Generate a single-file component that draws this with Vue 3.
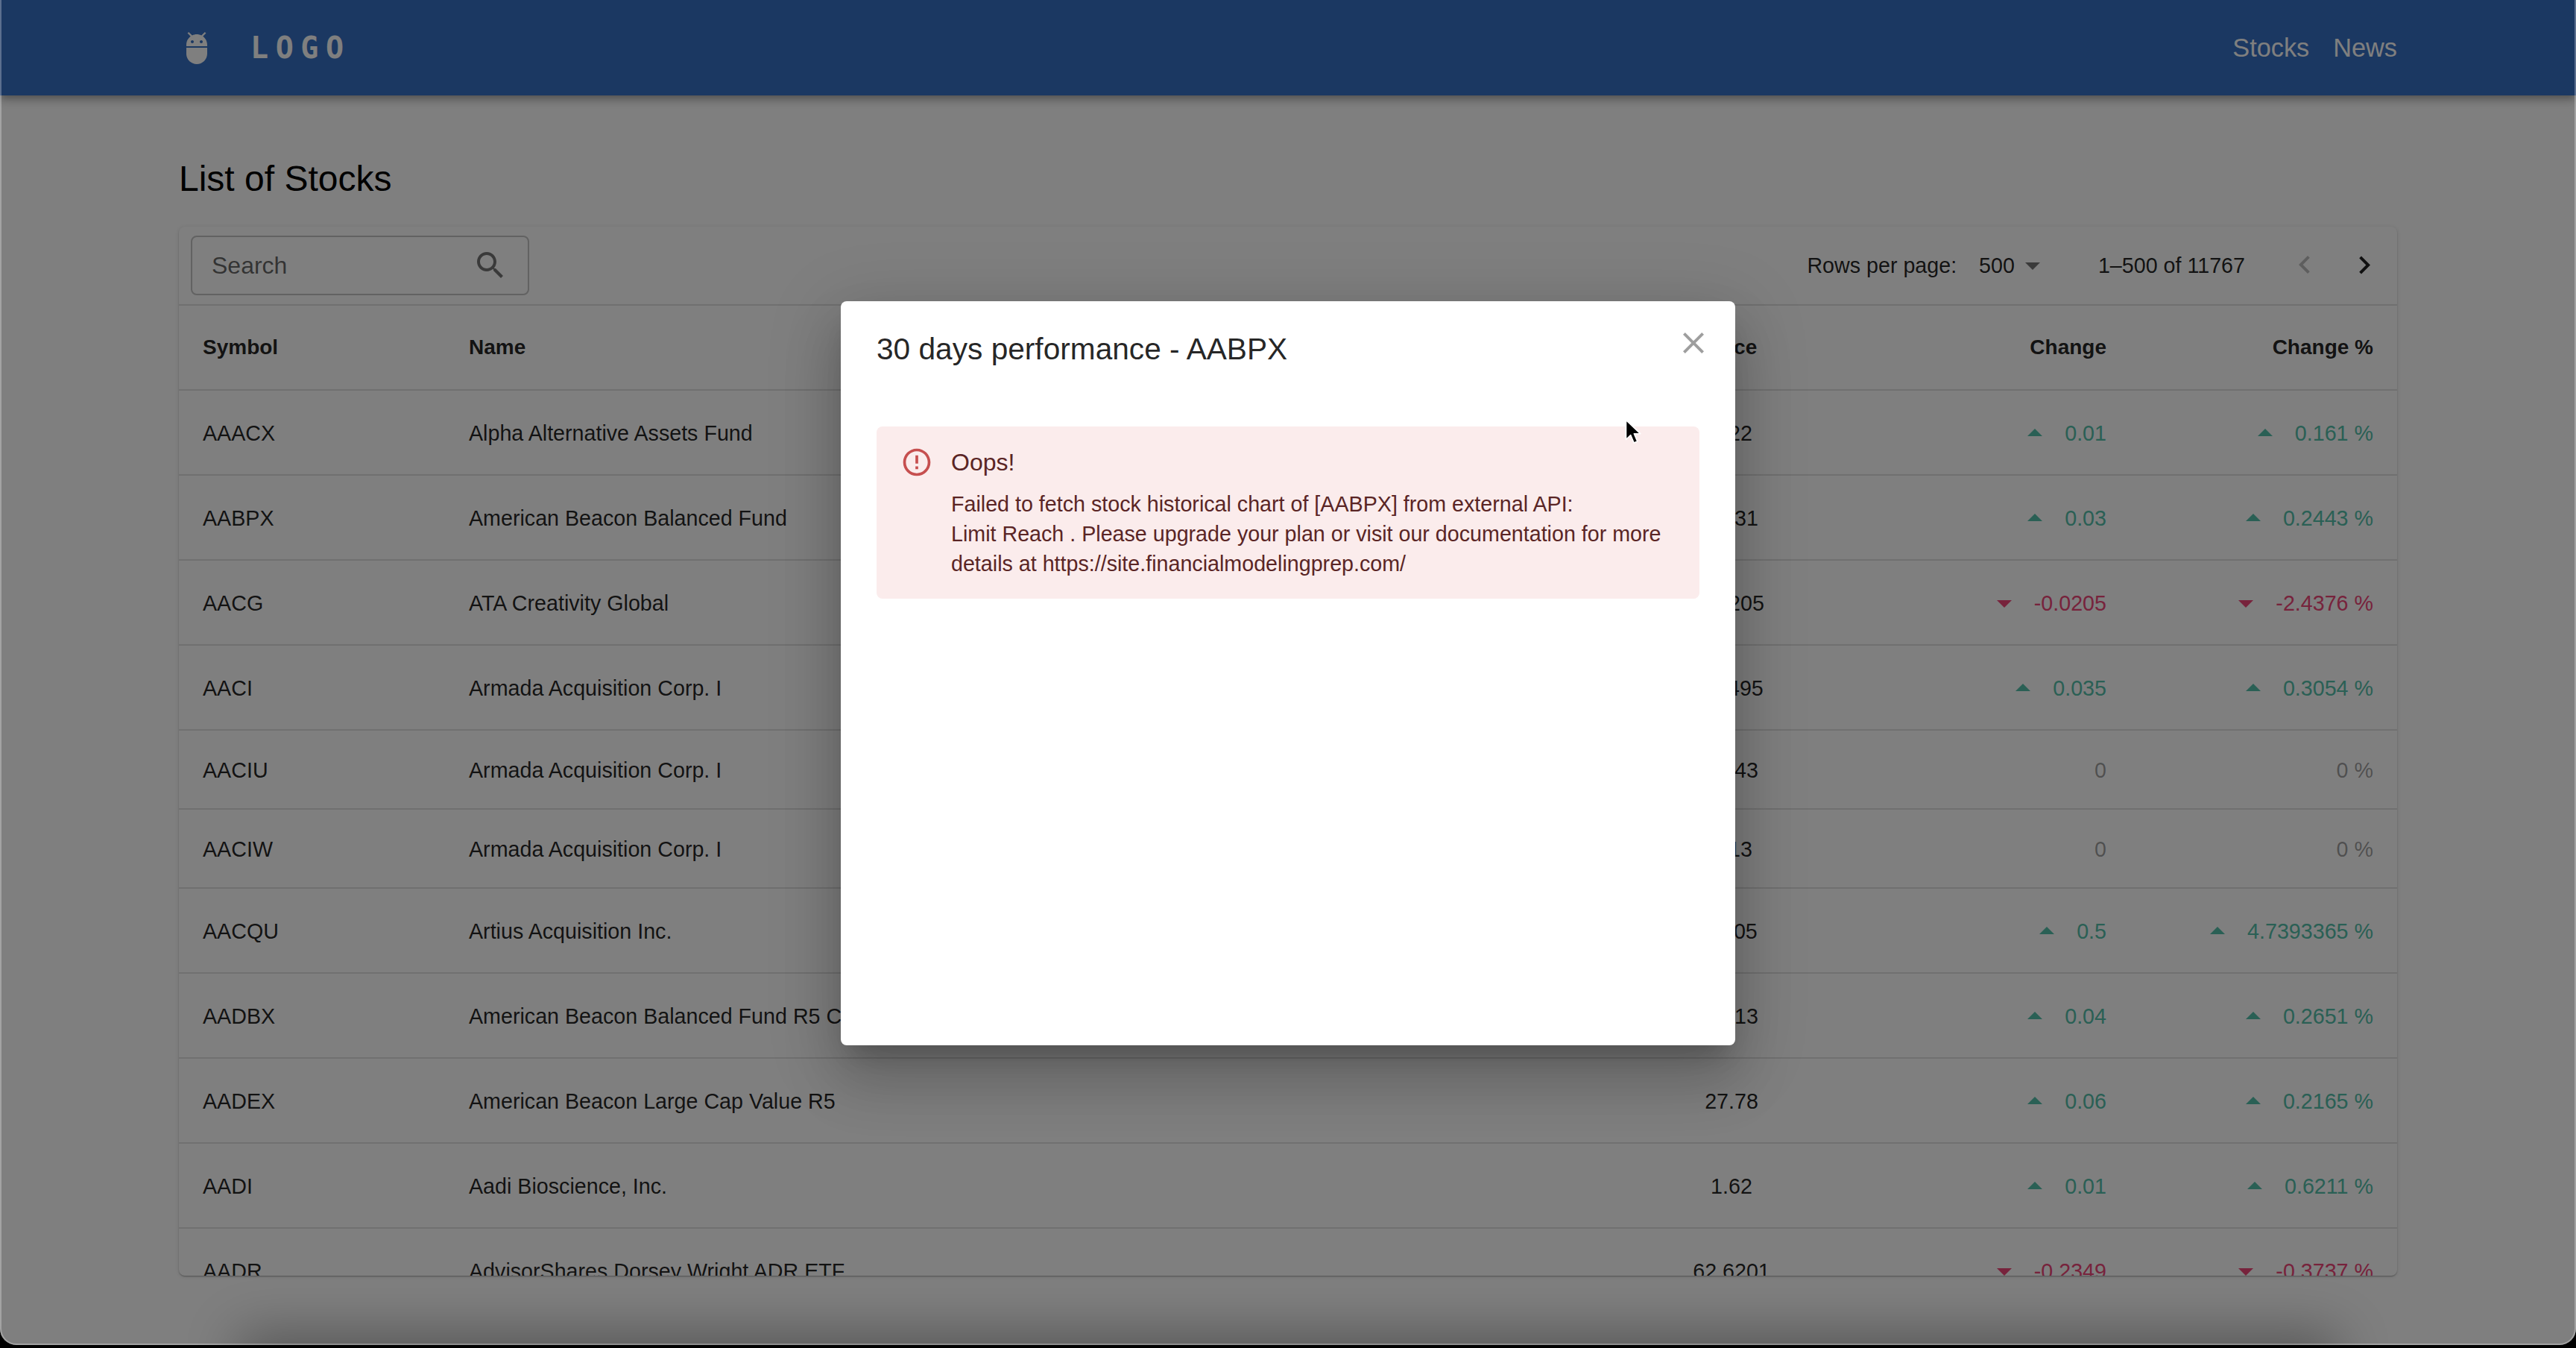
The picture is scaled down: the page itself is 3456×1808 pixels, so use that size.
<script setup>
const rows = [
  { symbol: 'AAACX', name: 'Alpha Alternative Assets Fund', price: '6.22', change: 0.01, percent: 0.161 },
  { symbol: 'AABPX', name: 'American Beacon Balanced Fund', price: '12.31', change: 0.03, percent: 0.2443 },
  { symbol: 'AACG', name: 'ATA Creativity Global', price: '0.8205', change: -0.0205, percent: -2.4376 },
  { symbol: 'AACI', name: 'Armada Acquisition Corp. I', price: '11.495', change: 0.035, percent: 0.3054 },
  { symbol: 'AACIU', name: 'Armada Acquisition Corp. I', price: '10.43', change: 0, percent: 0 },
  { symbol: 'AACIW', name: 'Armada Acquisition Corp. I', price: '0.13', change: 0, percent: 0 },
  { symbol: 'AACQU', name: 'Artius Acquisition Inc.', price: '11.05', change: 0.5, percent: 4.7393365 },
  { symbol: 'AADBX', name: 'American Beacon Balanced Fund R5 Class', price: '15.13', change: 0.04, percent: 0.2651 },
  { symbol: 'AADEX', name: 'American Beacon Large Cap Value R5', price: '27.78', change: 0.06, percent: 0.2165 },
  { symbol: 'AADI', name: 'Aadi Bioscience, Inc.', price: '1.62', change: 0.01, percent: 0.6211 },
  { symbol: 'AADR', name: 'AdvisorShares Dorsey Wright ADR ETF', price: '62.6201', change: -0.2349, percent: -0.3737 },
]

function trend(value) {
  if (value > 0) return 'up'
  if (value < 0) return 'down'
  return 'flat'
}
</script>

<template>
  <div class="screen">
    <header class="appbar">
      <div class="brand">
        <svg class="brand-icon" viewBox="0 0 24 24">
          <path d="M5 16c0 3.87 3.13 7 7 7s7-3.13 7-7v-4H5v4zM16.12 4.37l2.1-2.1-.82-.83-2.3 2.31C14.16 3.28 13.1 3 12 3s-2.16.28-3.09.75L6.6 1.44l-.82.83 2.1 2.1C6.14 5.64 5 7.68 5 10v1h14v-1c0-2.32-1.14-4.36-2.88-5.63zM9 9c-.55 0-1-.45-1-1s.45-1 1-1 1 .45 1 1-.45 1-1 1zm6 0c-.55 0-1-.45-1-1s.45-1 1-1 1 .45 1 1-.45 1-1 1z" />
        </svg>
        <span class="brand-text">LOGO</span>
      </div>
      <nav class="nav">
        <a>Stocks</a>
        <a>News</a>
      </nav>
    </header>

    <main class="page">
      <h1 class="page-title">List of Stocks</h1>

      <section class="card">
        <div class="toolbar">
          <label class="search">
            <input type="text" placeholder="Search" />
            <svg viewBox="0 0 24 24">
              <path d="M15.5 14h-.79l-.28-.27C15.41 12.59 16 11.11 16 9.5 16 5.91 13.09 3 9.5 3S3 5.91 3 9.5 5.91 16 9.5 16c1.61 0 3.09-.59 4.23-1.57l.27.28v.79l5 4.99L20.49 19l-4.99-5zm-6 0C7.01 14 5 11.99 5 9.5S7.01 5 9.5 5 14 7.01 14 9.5 11.99 14 9.5 14z" />
            </svg>
          </label>
          <div class="pagination">
            <span>Rows per page:</span>
            <span class="select">
              500
              <svg viewBox="0 0 24 24"><path d="M7 10l5 5 5-5z" /></svg>
            </span>
            <span>1–500 of 11767</span>
            <div class="page-actions">
              <button class="disabled">
                <svg viewBox="0 0 24 24"><path d="M15.41 16.09l-4.58-4.59 4.58-4.59L14 5.5l-6 6 6 6z" /></svg>
              </button>
              <button>
                <svg viewBox="0 0 24 24"><path d="M8.59 16.34l4.58-4.59-4.58-4.59L10 5.75l6 6-6 6z" /></svg>
              </button>
            </div>
          </div>
        </div>

        <div class="table-wrap">
          <table>
            <colgroup>
              <col style="width: 357px" />
              <col />
              <col style="width: 362px" />
              <col style="width: 354px" />
              <col style="width: 358px" />
            </colgroup>
            <thead>
              <tr>
                <th>Symbol</th>
                <th>Name</th>
                <th class="center">Price</th>
                <th class="right">Change</th>
                <th class="right">Change %</th>
              </tr>
            </thead>
            <tbody>
              <tr v-for="row in rows" :key="row.symbol">
                <td>{{ row.symbol }}</td>
                <td class="name">{{ row.name }}</td>
                <td class="center">{{ row.price }}</td>
                <td>
                  <div class="delta" :class="trend(row.change)">
                    <svg v-if="row.change > 0" viewBox="0 0 24 24"><path d="M7 14l5-5 5 5z" /></svg>
                    <svg v-else-if="row.change < 0" viewBox="0 0 24 24"><path d="M7 10l5 5 5-5z" /></svg>
                    <span>{{ row.change }}</span>
                  </div>
                </td>
                <td>
                  <div class="delta" :class="trend(row.percent)">
                    <svg v-if="row.percent > 0" viewBox="0 0 24 24"><path d="M7 14l5-5 5 5z" /></svg>
                    <svg v-else-if="row.percent < 0" viewBox="0 0 24 24"><path d="M7 10l5 5 5-5z" /></svg>
                    <span>{{ row.percent }} %</span>
                  </div>
                </td>
              </tr>
            </tbody>
          </table>
        </div>
      </section>
    </main>

    <div class="backdrop">
      <div class="modal">
        <h2 class="modal-title">30 days performance - AABPX</h2>
        <button class="close">
          <svg viewBox="0 0 24 24">
            <path d="M19 6.41 17.59 5 12 10.59 6.41 5 5 6.41 10.59 12 5 17.59 6.41 19 12 13.41 17.59 19 19 17.59 13.41 12z" />
          </svg>
        </button>
        <div class="alert">
          <svg class="alert-icon" viewBox="0 0 24 24">
            <path d="M11 15h2v2h-2zm0-8h2v6h-2zm.99-5C6.47 2 2 6.48 2 12s4.47 10 9.99 10C17.52 22 22 17.52 22 12S17.52 2 11.99 2zM12 20c-4.42 0-8-3.58-8-8s3.58-8 8-8 8 3.58 8 8-3.58 8-8 8z" />
          </svg>
          <div class="alert-body">
            <div class="alert-title">Oops!</div>
            <div>
              Failed to fetch stock historical chart of [AABPX] from external API:<br />
              Limit Reach . Please upgrade your plan or visit our documentation for more details at https://site.financialmodelingprep.com/
            </div>
          </div>
        </div>
      </div>
    </div>

    <div class="dock-shadow"></div>
    <div class="edge"></div>

    <svg class="cursor" viewBox="0 0 22 34">
      <path d="M1.5 1.5v26l6.2-6 4.4 10.5 4.6-2-4.4-10.2h8.6z" fill="#000" stroke="#fff" stroke-width="1.6" stroke-linejoin="round" />
    </svg>
  </div>
</template>

<style>
html,
body {
  margin: 0;
  background: #000;
  overflow: hidden;
}
</style>

<style scoped>
.screen {
  position: relative;
  width: 3456px;
  height: 1804px;
  overflow: hidden;
  background: #fff;
  border-radius: 0 0 22px 22px;
  font-family: "Liberation Sans", Arial, sans-serif;
  font-size: 28.67px;
  line-height: 40px;
  color: rgba(0, 0, 0, 0.87);
}

.appbar {
  display: flex;
  align-items: center;
  justify-content: space-between;
  box-sizing: border-box;
  height: 128px;
  padding: 0 240px;
  background: #3670c4;
  color: #fff;
  box-shadow: 0 4px 8px -2px rgba(0, 0, 0, 0.2), 0 8px 10px rgba(0, 0, 0, 0.14), 0 2px 20px rgba(0, 0, 0, 0.12);
}

.brand {
  display: flex;
  align-items: center;
  gap: 48px;
}

.brand-icon {
  width: 48px;
  height: 48px;
  fill: #fff;
}

.brand-text {
  font-family: "DejaVu Sans Mono", monospace;
  font-size: 40px;
  font-weight: 700;
  letter-spacing: 9.6px;
}

.nav {
  display: flex;
  gap: 32px;
  font-size: 34.3px;
}

.page {
  padding: 80px 240px 0;
}

.page-title {
  margin: 0 0 32px;
  font-size: 48px;
  font-weight: 400;
  line-height: 64px;
  color: #000;
}

.card {
  display: flex;
  flex-direction: column;
  height: 1407px;
  background: #fff;
  border-radius: 8px;
  overflow: hidden;
  box-shadow: 0 2px 2px -1px rgba(0, 0, 0, 0.2), 0 1px 2px rgba(0, 0, 0, 0.14), 0 1px 6px rgba(0, 0, 0, 0.12);
}

.toolbar {
  display: flex;
  align-items: center;
  justify-content: space-between;
  box-sizing: border-box;
  flex: none;
  height: 106px;
  padding: 0 4px 0 16px;
  border-bottom: 2px solid #e0e0e0;
}

.search {
  display: flex;
  align-items: center;
  box-sizing: border-box;
  width: 454px;
  height: 80px;
  padding: 0 26px 0 26px;
  border: 2px solid #c4c4c4;
  border-radius: 8px;
}

.search input {
  flex: 1;
  min-width: 0;
  padding: 0;
  border: 0;
  outline: 0;
  background: none;
  font: inherit;
  font-size: 32px;
}

.search input::placeholder {
  color: rgba(0, 0, 0, 0.6);
  opacity: 1;
}

.search svg {
  width: 48px;
  height: 48px;
  fill: rgba(0, 0, 0, 0.54);
}

.pagination {
  display: flex;
  align-items: center;
}

.select {
  display: flex;
  align-items: center;
  margin: 0 64px 0 30px;
}

.select svg {
  width: 48px;
  height: 48px;
  fill: rgba(0, 0, 0, 0.54);
}

.page-actions {
  display: flex;
  margin-left: 40px;
}

.page-actions button {
  display: flex;
  padding: 16px;
  border: 0;
  background: none;
}

.page-actions svg {
  width: 48px;
  height: 48px;
  fill: rgba(0, 0, 0, 0.87);
}

.page-actions .disabled svg {
  fill: rgba(0, 0, 0, 0.26);
}

.table-wrap {
  flex: 1;
  min-height: 0;
  overflow: hidden;
}

table {
  width: 100%;
  table-layout: fixed;
  border-collapse: separate;
  border-spacing: 0;
}

th,
td {
  padding: 33px 32px 31px;
  border-bottom: 2px solid #e0e0e0;
  text-align: left;
  font-weight: 400;
}

th {
  height: 48px;
  padding: 32px;
  font-size: 28px;
  font-weight: 700;
}

.name {
  white-space: nowrap;
}

.center {
  text-align: center;
}

.right {
  text-align: right;
}

.delta {
  display: flex;
  align-items: center;
  justify-content: flex-end;
  gap: 16px;
}

.delta svg {
  width: 48px;
  height: 48px;
  fill: currentColor;
}

.delta.up {
  color: #54c0aa;
}

.delta.down {
  color: #ee4678;
}

.delta.flat {
  color: rgba(0, 0, 0, 0.38);
}

.backdrop {
  position: absolute;
  inset: 0;
  display: flex;
  align-items: center;
  justify-content: center;
  box-sizing: border-box;
  padding-top: 2px;
  background: rgba(0, 0, 0, 0.5);
}

.modal {
  position: relative;
  box-sizing: border-box;
  width: 1200px;
  height: 998px;
  padding: 32px 48px;
  background: #fff;
  border-radius: 8px;
  box-shadow: 0 22px 30px -14px rgba(0, 0, 0, 0.2), 0 48px 76px 6px rgba(0, 0, 0, 0.14), 0 18px 92px 16px rgba(0, 0, 0, 0.12);
}

.modal-title {
  margin: 0 0 72px;
  font-size: 40.65px;
  font-weight: 400;
  line-height: 64px;
}

.close {
  position: absolute;
  top: 32px;
  right: 32px;
  display: flex;
  padding: 0;
  border: 0;
  background: none;
}

.close svg {
  width: 48px;
  height: 48px;
  fill: rgba(0, 0, 0, 0.38);
}

.alert {
  display: flex;
  gap: 24px;
  padding: 12px 32px;
  background: #fbecec;
  border-radius: 8px;
  color: #5a2525;
}

.alert-icon {
  flex: none;
  width: 44px;
  height: 44px;
  margin-top: 14px;
  fill: #c64f4f;
}

.alert-body {
  min-width: 0;
  padding: 16px 0 15px;
}

.alert-title {
  margin: -4px 0 12px;
  font-size: 32px;
  line-height: 48px;
}

.dock-shadow {
  position: absolute;
  left: 340px;
  right: 340px;
  top: 1808px;
  height: 40px;
  box-shadow: 0 0 70px 20px rgba(0, 0, 0, 0.32);
}

.edge {
  position: absolute;
  inset: 0;
  border: solid rgba(255, 255, 255, 0.28);
  border-width: 0 2px 2px;
  border-radius: 0 0 22px 22px;
  pointer-events: none;
}

.cursor {
  position: absolute;
  left: 2180px;
  top: 562px;
  width: 22px;
  height: 34px;
}
</style>
